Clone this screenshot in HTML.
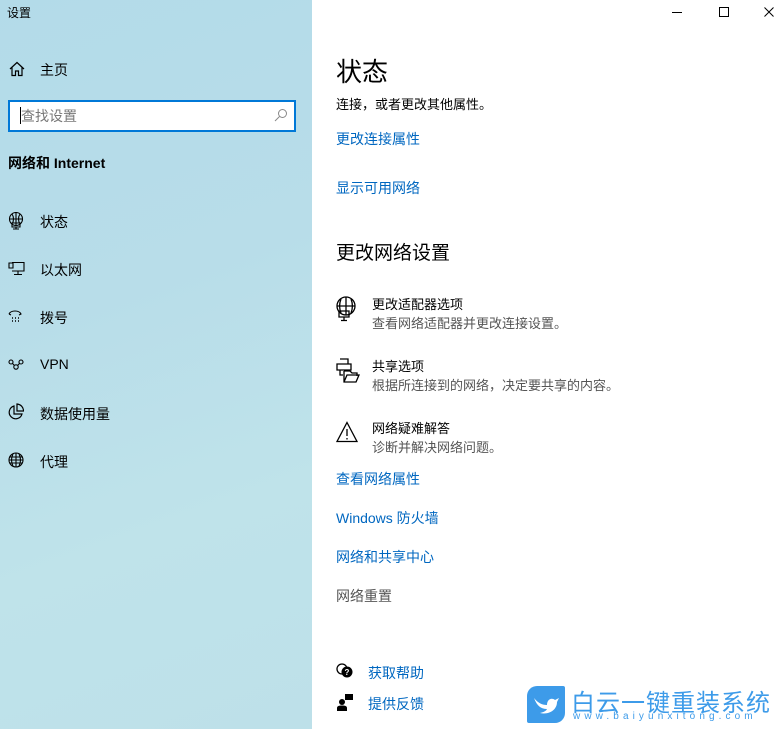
<!DOCTYPE html>
<html><head><meta charset="utf-8"><style>
*{margin:0;padding:0;box-sizing:border-box}
body{width:780px;height:729px;overflow:hidden;position:relative;font-family:"Liberation Sans","Noto Sans CJK SC",sans-serif;background:#fff;color:#000}
#side{position:absolute;left:0;top:0;width:312px;height:729px;background:linear-gradient(160deg,#b3dbe9 0%,#b8dde9 40%,#bfe3ea 70%,#bde0e9 100%)}
.t{position:absolute;font-size:14px;white-space:nowrap}
.ic{position:absolute}
.l{position:absolute;left:336px;font-size:14px;color:#0067c0;white-space:nowrap}
.s{color:#555;font-size:13px}
</style></head><body>
<div id="side">
<div class="t" style="left:7px;top:4px;font-size:12px">设置</div>
<svg class="ic" style="left:9px;top:61px" width="16" height="16" viewBox="0 0 16 16" fill="none" stroke="#000" stroke-width="1.2"><path d="M1 8L8 1.5L15 8M3 6.5V14.5H6.5V10H9.5V14.5H13V6.5"/></svg>
<div class="t" style="left:40px;top:60px">主页</div>
<div style="position:absolute;left:8px;top:100px;width:288px;height:32px;border:2px solid #0078d7;background:#fff"></div>
<div style="position:absolute;left:20px;top:107px;width:1px;height:17px;background:#000"></div>
<div class="t" style="left:21px;top:106px;color:#777">查找设置</div>
<svg class="ic" style="left:274px;top:108px" width="14" height="14" viewBox="0 0 14 14" fill="none" stroke="#888" stroke-width="1"><circle cx="8.5" cy="5.5" r="4"/><path d="M5.5 8.5L1 13"/></svg>
<div class="t" style="left:8px;top:153px;font-weight:bold;font-size:14px">网络和 Internet</div>
<svg class="ic" style="left:8px;top:212px" width="16" height="18" viewBox="0 0 16 18" fill="none" stroke="#000" stroke-width="1.1"><circle cx="8" cy="7" r="6.5"/><path d="M1.5 7H14.5M8 .5V13.5M4 2C6 5 6 9 4 12M12 2C10 5 10 9 12 12M4 11h8v4H4zM8 15v2M5 17h6"/></svg>
<div class="t" style="left:40px;top:212px">状态</div>
<svg class="ic" style="left:8px;top:261px" width="17" height="15" viewBox="0 0 17 15" fill="none" stroke="#000" stroke-width="1.1"><path d="M4 1.5H16V10H4M1 2h4v5H1zM10 10V13M6 13.5H14"/></svg>
<div class="t" style="left:40px;top:260px">以太网</div>
<svg class="ic" style="left:8px;top:309px" width="14" height="14" viewBox="0 0 14 14" fill="none" stroke="#000" stroke-width="1.1"><path d="M1 5C3 1 11 1 13 5L11 6M3 6L1 5"/><path d="M4 9h1M7 9h1M10 9h1M4 12h1M7 12h1M10 12h1" stroke-width="1.5"/></svg>
<div class="t" style="left:40px;top:308px">拨号</div>
<svg class="ic" style="left:8px;top:359px" width="16" height="12" viewBox="0 0 16 12" fill="none" stroke="#000" stroke-width="1.1"><circle cx="3" cy="3" r="2"/><circle cx="13" cy="3" r="2"/><circle cx="8" cy="8" r="2.2"/><path d="M4.5 4.5L6.5 6.5M11.5 4.5L9.5 6.5"/></svg>
<div class="t" style="left:40px;top:356px">VPN</div>
<svg class="ic" style="left:8px;top:403px" width="16" height="17" viewBox="0 0 16 17" fill="none" stroke="#000" stroke-width="1.2"><path d="M6 3A6.5 6.5 0 1 0 14 11H6z"/><path d="M9 1V8H15.5A7 7 0 0 0 9 1z"/></svg>
<div class="t" style="left:40px;top:404px">数据使用量</div>
<svg class="ic" style="left:8px;top:452px" width="16" height="16" viewBox="0 0 16 16" fill="none" stroke="#000" stroke-width="1.1"><circle cx="8" cy="8" r="7"/><path d="M1 8H15M8 1V15M1.5 5H14.5M1.5 11H14.5M5 2C3 6 3 10 5 14M11 2C13 6 13 10 11 14"/></svg>
<div class="t" style="left:40px;top:452px">代理</div>
</div>
<svg class="ic" style="left:670px;top:5px" width="110" height="14" viewBox="0 0 110 14" fill="none" stroke="#000" stroke-width="1"><path d="M2 7.5H12M49.5 2.5h9v9h-9zM94.5 2.5L103.5 11.5M94.5 11.5L103.5 2.5"/></svg>
<div class="t" style="left:336px;top:52px;font-size:26px">状态</div>
<div class="t" style="left:336px;top:94px;font-size:13px">连接，或者更改其他属性。</div>
<div class="l" style="top:129px">更改连接属性</div>
<div class="l" style="top:178px">显示可用网络</div>
<div class="t" style="left:336px;top:238px;font-size:19px">更改网络设置</div>
<svg class="ic" style="left:336px;top:296px" width="22" height="26" viewBox="0 0 22 26" fill="none" stroke="#000" stroke-width="1.3"><circle cx="10" cy="10" r="9"/><path d="M1 10H19M10 1V19M5 3C3 8 3 12 5 17M15 3C17 8 17 12 15 17M3 15h10v6H3zM8 21v3M5 24.5h6"/></svg>
<div class="t" style="left:372px;top:294px;font-size:13px">更改适配器选项</div>
<div class="t s" style="left:372px;top:313px">查看网络适配器并更改连接设置。</div>
<svg class="ic" style="left:336px;top:358px" width="24" height="26" viewBox="0 0 24 26" fill="none" stroke="#000" stroke-width="1.3"><path d="M4 1h8v5M1 6h14v6H1zM4 12v5h3M8 13h6l2 2h5v3M8 13v11h12l3-7H11l-3 7"/></svg>
<div class="t" style="left:372px;top:356px;font-size:13px">共享选项</div>
<div class="t s" style="left:372px;top:375px">根据所连接到的网络，决定要共享的内容。</div>
<svg class="ic" style="left:336px;top:421px" width="22" height="22" viewBox="0 0 22 22" fill="none" stroke="#000" stroke-width="1.3"><path d="M11 1.5L21 20.5H1z"/><path d="M11 8V15M11 17V18.5"/></svg>
<div class="t" style="left:372px;top:418px;font-size:13px">网络疑难解答</div>
<div class="t s" style="left:372px;top:437px">诊断并解决网络问题。</div>
<div class="l" style="top:469px">查看网络属性</div>
<div class="l" style="top:508px">Windows 防火墙</div>
<div class="l" style="top:547px">网络和共享中心</div>
<div class="t" style="left:336px;top:586px;color:#555">网络重置</div>
<svg class="ic" style="left:336px;top:663px" width="18" height="16" viewBox="0 0 18 16"><circle cx="6" cy="6" r="5" fill="none" stroke="#000" stroke-width="1.3"/><circle cx="11" cy="9" r="5.5" fill="#000"/><text x="11" y="12" font-size="8" fill="#fff" text-anchor="middle" font-family="Liberation Sans" font-weight="bold">?</text></svg>
<div class="t" style="left:368px;top:663px;color:#0067c0">获取帮助</div>
<svg class="ic" style="left:337px;top:694px" width="16" height="17" viewBox="0 0 16 17"><rect x="8" y="0" width="8" height="6" fill="#000"/><circle cx="5" cy="8" r="3" fill="#000"/><path d="M0 17V14C0 12 2 11.5 5 11.5S10 12 10 14V17z" fill="#000"/></svg>
<div class="t" style="left:368px;top:694px;color:#0067c0">提供反馈</div>
<div style="position:absolute;left:527px;top:686px;width:38px;height:37px;background:#3d9be9;border-radius:10px 2px 10px 2px"></div>
<svg class="ic" style="left:532px;top:692px" width="28" height="24" viewBox="0 0 28 24"><path d="M2 6C6 11 10 13 15 13C15 8 19 5 23 8L27 6L25 10C25 18 17 23 8 21C12 20 14 19 15 17C9 17 5 14 2 6z" fill="#fff"/></svg>
<div class="t" style="left:571px;top:683px;font-size:24px;color:#3d9be9;letter-spacing:1px">白云一键重装系统</div>
<div class="t" style="left:573px;top:711px;font-size:10px;color:#3d9be9;letter-spacing:4.1px">www.baiyunxitong.com</div>
</body></html>
